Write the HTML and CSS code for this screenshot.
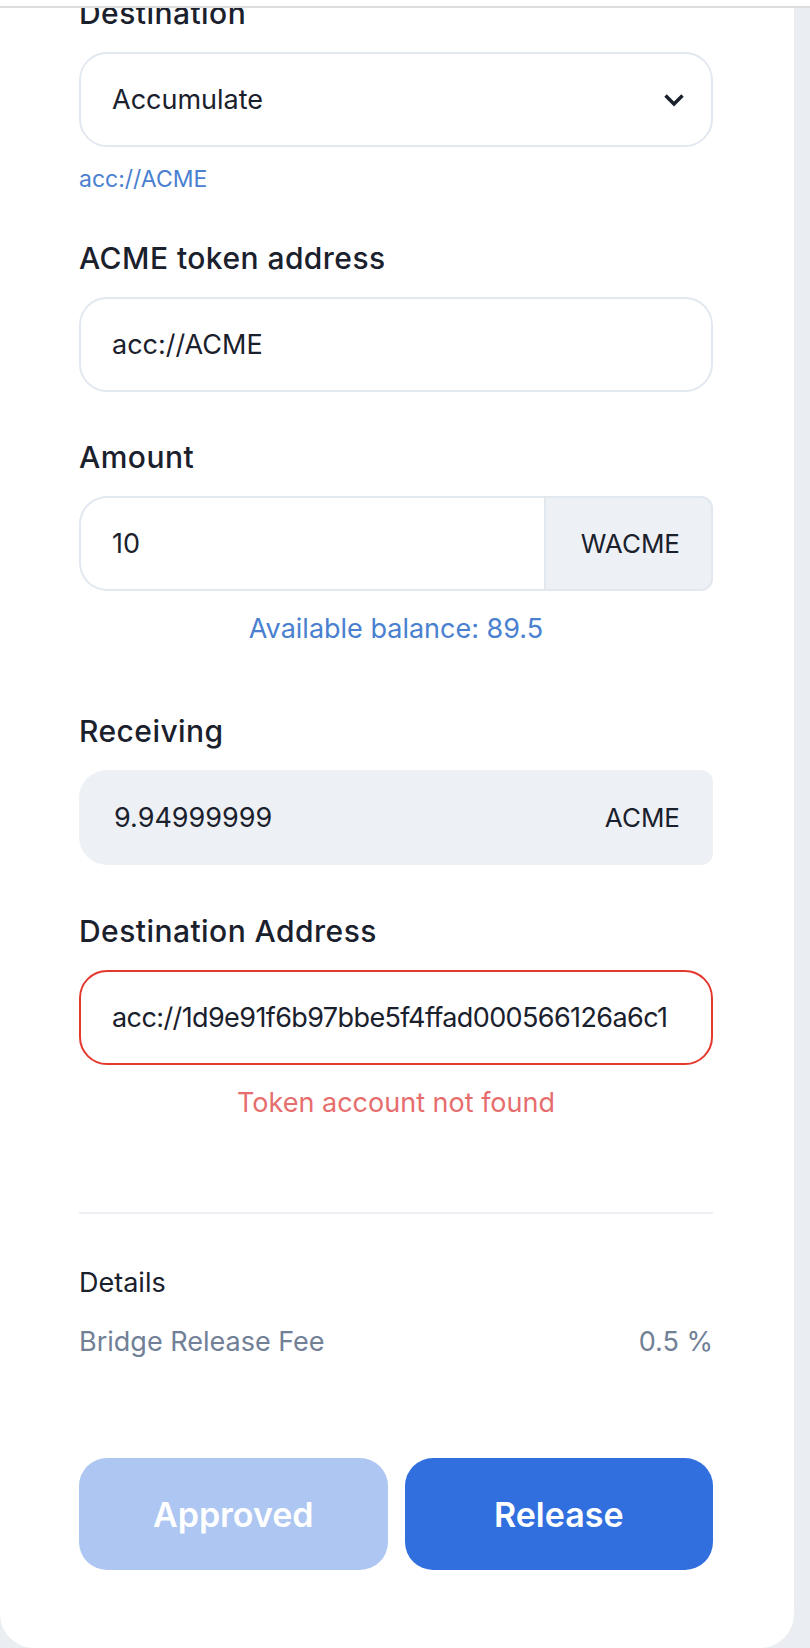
FILE: index.html
```html
<!DOCTYPE html>
<html lang="en">
<head>
<meta charset="utf-8">
<title>Release</title>
<link rel="stylesheet" href="styles.css">
</head>
<body>
<header class="topbar"></header>
<main class="card">
  <div class="field field-hinted">
    <label class="label" for="dest">Destination</label>
    <div class="select-wrap">
      <select id="dest" class="control select"><option>Accumulate</option></select>
      <svg class="chevron" width="22" height="14" viewBox="0 0 22 14" aria-hidden="true"><path d="M2.5 2.5 L11 11 L19.5 2.5" fill="none" stroke="#1a202c" stroke-width="3.4"/></svg>
    </div>
    <p class="hint">acc://ACME</p>
  </div>

  <div class="field">
    <label class="label" for="token">ACME token address</label>
    <input id="token" class="control" type="text" value="acc://ACME" readonly>
  </div>

  <div class="field field-balance">
    <label class="label" for="amount">Amount</label>
    <div class="group">
      <input id="amount" class="control group-input" type="text" value="10" readonly>
      <span class="addon">WACME</span>
    </div>
    <p class="note note-blue">Available balance: 89.5</p>
  </div>

  <div class="field field-receiving">
    <label class="label" for="recv">Receiving</label>
    <div class="group group-muted">
      <input id="recv" class="control group-input muted" type="text" value="9.94999999" readonly>
      <span class="addon addon-muted">ACME</span>
    </div>
  </div>

  <div class="field field-last">
    <label class="label" for="addr">Destination Address</label>
    <input id="addr" class="control invalid" type="text" value="acc://1d9e91f6b97bbe5f4ffad000566126a6c1" readonly>
    <p class="note note-red">Token account not found</p>
  </div>

  <hr class="divider">

  <section class="details">
    <h3 class="details-title">Details</h3>
    <div class="detail-row"><span>Bridge Release Fee</span><span>0.5 %</span></div>
  </section>

  <div class="actions">
    <button class="btn btn-approved" type="button">Approved</button>
    <button class="btn btn-release" type="button">Release</button>
  </div>
</main>
</body>
</html>
```

FILE: styles.css
```css
* { box-sizing: border-box; }

html { overflow: hidden; }

body {
  margin: 0;
  background: #eaedf1;
  font-family: Inter, "Noto Sans", "Liberation Sans", sans-serif;
  color: #1a202c;
}

.topbar {
  position: fixed;
  top: 0;
  left: 0;
  right: 0;
  height: 8px;
  background: #ffffff;
  border-bottom: 2px solid #dcdddf;
  z-index: 10;
}

.card {
  width: 794px;
  margin-top: -5px;
  padding: 0 81px 78px 79px;
  background: #ffffff;
  border-radius: 0 0 34px 34px;
}

.field { margin-bottom: 47px; }
.field-hinted { margin-bottom: 46px; }
.field-balance { margin-bottom: 67px; }
.field-receiving { margin-bottom: 48px; }
.field-last { margin-bottom: 0; }

.label {
  display: block;
  font-size: 30px;
  font-weight: 500;
  letter-spacing: 0.45px;
  line-height: 36px;
  margin-bottom: 21px;
  color: #1a202c;
}

.control {
  display: block;
  width: 100%;
  height: 95px;
  margin: 0;
  padding: 0 31px;
  border: 2px solid #e2e8f0;
  border-radius: 28px;
  background: #ffffff;
  font-family: inherit;
  font-size: 27px;
  color: #1a202c;
  outline: none;
}

.select-wrap { position: relative; }

.select {
  appearance: none;
  -webkit-appearance: none;
}

.chevron {
  position: absolute;
  right: 28px;
  top: 50%;
  transform: translateY(-50%);
}

.hint {
  margin: 17px 0 0;
  font-size: 23px;
  line-height: 30px;
  color: #4a80d0;
}

.group {
  display: flex;
  height: 95px;
}

.group-input {
  flex: 1;
  min-width: 0;
  height: 95px;
  border-radius: 28px 0 0 28px;
  border-right: none;
}

.addon {
  display: flex;
  align-items: center;
  padding: 0 31px 0 35px;
  background: #edf1f5;
  border: 2px solid #e2e8f0;
  border-radius: 0 12px 12px 0;
  font-size: 26px;
  color: #1a202c;
}

.muted {
  background: #edf1f5;
  border-color: #edf1f5;
  padding-left: 33px;
}

.addon-muted {
  border-color: #edf1f5;
  border-left: none;
  padding-left: 0;
}

.note {
  margin: 21px 0 0;
  font-size: 27px;
  line-height: 34px;
  text-align: center;
}

.note-blue { color: #4a80d0; }
.note-red { color: #e66d6d; }

.invalid {
  border-color: #e5392f;
  letter-spacing: -0.6px;
}

.divider {
  margin: 92px 0 0;
  border: none;
  height: 2px;
  background: #edf0f5;
}

.details { margin-top: 52px; }

.details-title {
  margin: 0;
  font-size: 27px;
  font-weight: 400;
  line-height: 34px;
  color: #1a202c;
}

.detail-row {
  display: flex;
  justify-content: space-between;
  margin-top: 25px;
  font-size: 27px;
  line-height: 34px;
  color: #718096;
}

.actions {
  display: flex;
  gap: 17px;
  margin-top: 99px;
}

.btn {
  flex: 1;
  height: 112px;
  border: none;
  border-radius: 28px;
  font-family: inherit;
  font-size: 34px;
  font-weight: 600;
  color: #ffffff;
}

.btn-approved { background: #adc6f2; }
.btn-release { background: #316fdf; }
```
